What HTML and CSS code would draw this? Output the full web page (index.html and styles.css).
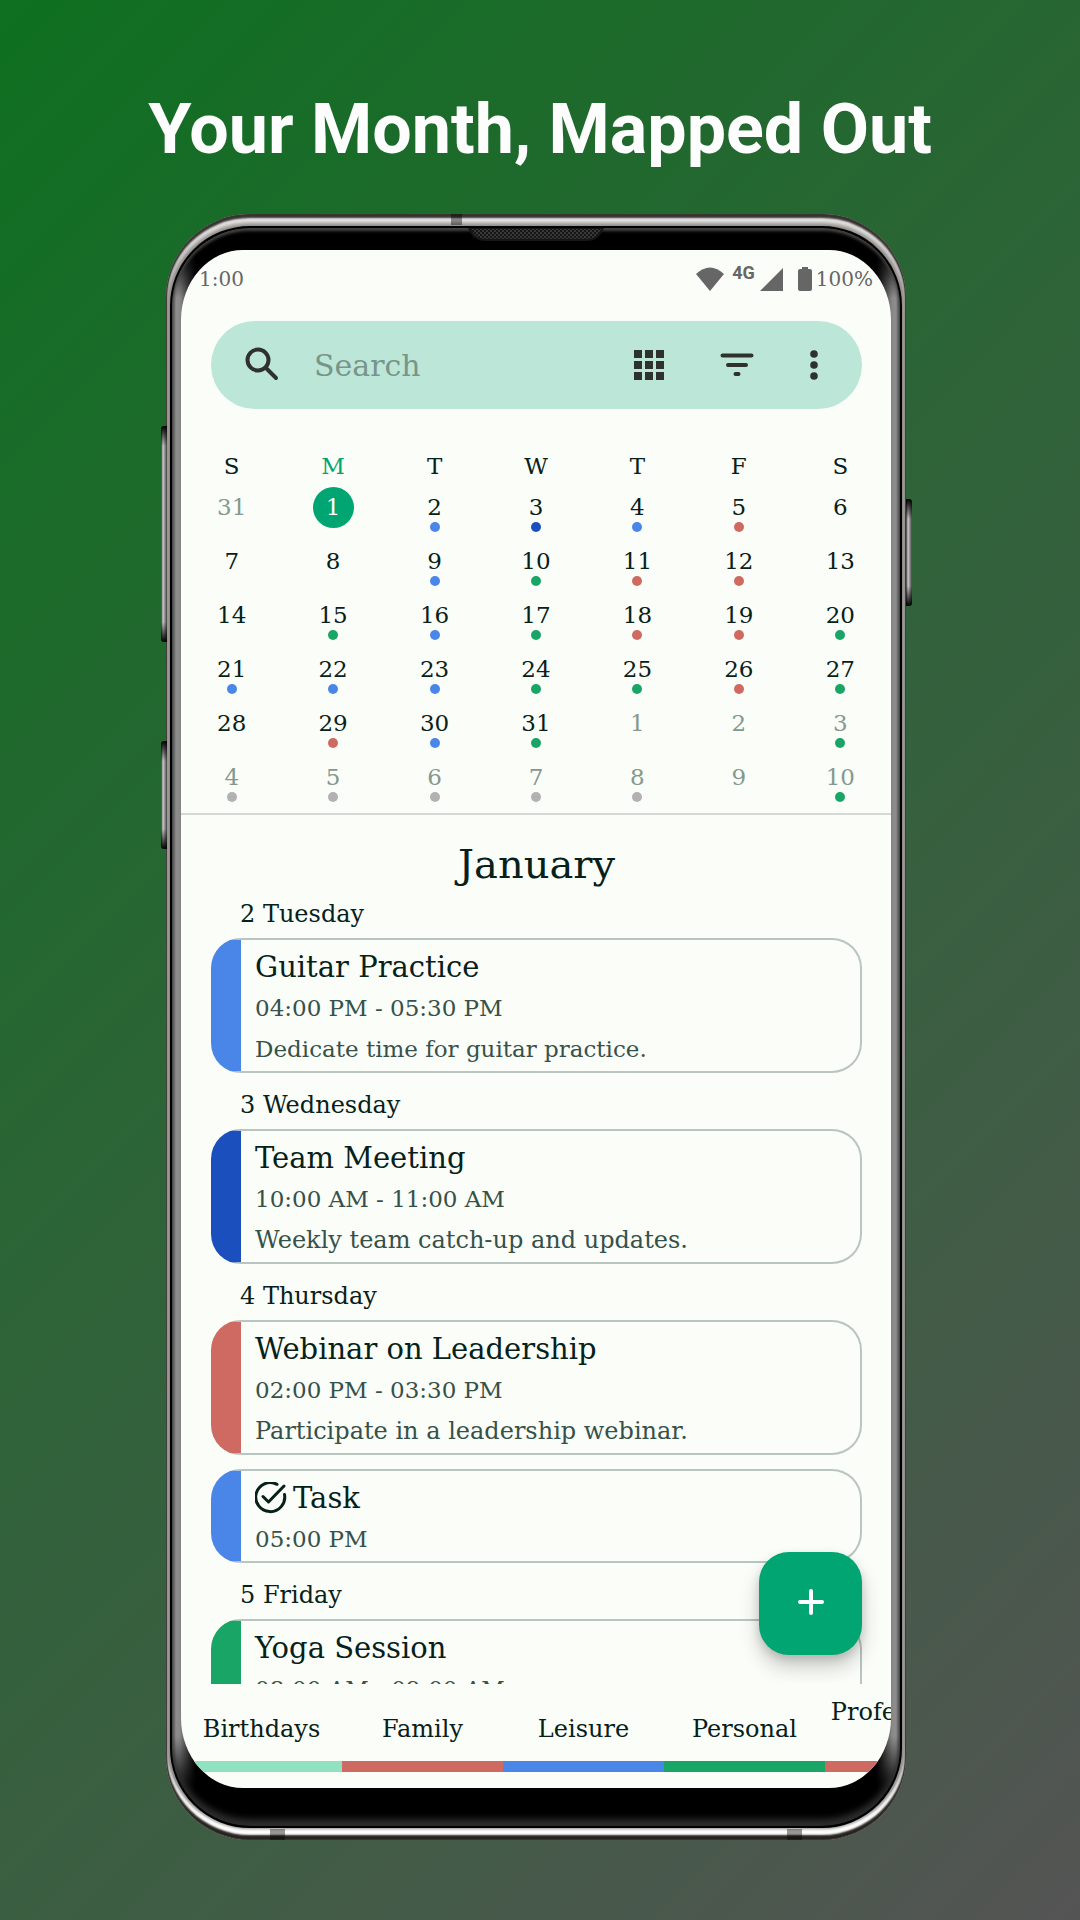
FILE: index.html
```html
<!DOCTYPE html>
<html lang="en">
<head>
<meta charset="utf-8">
<meta name="viewport" content="width=device-width, initial-scale=1">
<title>Your Month, Mapped Out</title>
<link rel="stylesheet" href="styles.css">
</head>
<body>
<main class="promo">
  <h1 class="headline">Your Month, Mapped Out</h1>
  <div class="phone">
    <span class="key key-volume"></span>
    <span class="key key-assist"></span>
    <span class="key key-power"></span>
    <span class="antenna antenna-top"></span>
    <span class="antenna antenna-left"></span>
    <span class="antenna antenna-right"></span>
    <div class="bezel">
      <svg class="speaker" viewBox="0 0 136 14" aria-hidden="true">
        <defs><pattern id="mesh" width="4" height="4" patternUnits="userSpaceOnUse"><path d="M0 0h2v2H0zM2 2h2v2H2z" fill="#383838"/></pattern></defs>
        <path d="M0 0h136c-4 9-8 13-18 13H18C8 13 4 9 0 0z" fill="#161616"/>
        <path d="M3 1h130c-4 8-8 10-16 10H19C11 11 7 9 3 1z" fill="url(#mesh)"/>
      </svg>
      <div class="screen">
        <header class="status">
          <span>1:00</span>
          <span class="status-icons">
            <svg class="wifi" viewBox="0 0 28 24" aria-hidden="true"><path d="M0 7Q14-6 28 7L14 24z" fill="currentColor"/></svg>
            <b class="network">4G</b>
            <svg class="signal" viewBox="0 0 23 23" aria-hidden="true"><path d="M23 0v23H0z" fill="currentColor"/></svg>
            <svg class="battery" viewBox="0 0 14 24" aria-hidden="true"><path d="M4 0h6v2h2q2 0 2 2v18q0 2-2 2H2q-2 0-2-2V4q0-2 2-2h2z" fill="currentColor"/></svg>
            <span>100%</span>
          </span>
        </header>

        <form class="search" role="search">
          <svg class="icon" viewBox="0 0 44 44" fill="none" stroke="currentColor" stroke-width="4" stroke-linecap="round" aria-hidden="true"><circle cx="18" cy="17" r="10.500"/><path d="M27 26l9 9"/></svg>
          <input class="search-input" type="text" placeholder="Search" aria-label="Search">
          <button class="icon-button" type="button" aria-label="Change view"><svg class="icon" viewBox="0 0 44 44" fill="currentColor" aria-hidden="true"><path d="M7 7h8v8H7zM18 7h8v8h-8zM29 7h8v8h-8zM7 18h8v8H7zM18 18h8v8h-8zM29 18h8v8h-8zM7 29h8v8H7zM18 29h8v8h-8zM29 29h8v8h-8z"/></svg></button>
          <button class="icon-button" type="button" aria-label="Filter"><svg class="icon" viewBox="0 0 44 44" fill="none" stroke="currentColor" stroke-width="4" stroke-linecap="round" aria-hidden="true"><path d="M7.500 12.500h29M13 22h18M20.500 31h3"/></svg></button>
          <button class="icon-button more" type="button" aria-label="More options"><svg class="icon" viewBox="0 0 44 44" fill="currentColor" aria-hidden="true"><circle cx="22" cy="11" r="3.800"/><circle cx="22" cy="22" r="3.800"/><circle cx="22" cy="33" r="3.800"/></svg></button>
        </form>

        <table class="calendar" aria-label="January">
          <thead><tr><th>S</th><th class="today-name">M</th><th>T</th><th>W</th><th>T</th><th>F</th><th>S</th></tr></thead>
          <tbody>
            <tr><td class="out">31</td><td class="today"><span>1</span></td><td class="dot blue">2</td><td class="dot navy">3</td><td class="dot blue">4</td><td class="dot red">5</td><td>6</td></tr>
            <tr><td>7</td><td>8</td><td class="dot blue">9</td><td class="dot green">10</td><td class="dot red">11</td><td class="dot red">12</td><td>13</td></tr>
            <tr><td>14</td><td class="dot green">15</td><td class="dot blue">16</td><td class="dot green">17</td><td class="dot red">18</td><td class="dot red">19</td><td class="dot green">20</td></tr>
            <tr><td class="dot blue">21</td><td class="dot blue">22</td><td class="dot blue">23</td><td class="dot green">24</td><td class="dot green">25</td><td class="dot red">26</td><td class="dot green">27</td></tr>
            <tr><td>28</td><td class="dot red">29</td><td class="dot blue">30</td><td class="dot green">31</td><td class="out">1</td><td class="out">2</td><td class="out dot green">3</td></tr>
            <tr><td class="out dot grey">4</td><td class="out dot grey">5</td><td class="out dot grey">6</td><td class="out dot grey">7</td><td class="out dot grey">8</td><td class="out">9</td><td class="out dot green">10</td></tr>
          </tbody>
        </table>

        <section class="agenda">
          <h2 class="month">January</h2>
          <h3 class="day">2 Tuesday</h3>
          <article class="event blue"><h4>Guitar Practice</h4><p>04:00 PM - 05:30 PM</p><p>Dedicate time for guitar practice.</p></article>
          <h3 class="day">3 Wednesday</h3>
          <article class="event navy"><h4>Team Meeting</h4><p>10:00 AM - 11:00 AM</p><p class="note">Weekly team catch-up and updates.</p></article>
          <h3 class="day">4 Thursday</h3>
          <article class="event red"><h4>Webinar on Leadership</h4><p>02:00 PM - 03:30 PM</p><p class="note">Participate in a leadership webinar.</p></article>
          <article class="event blue"><h4><svg class="check" viewBox="0 0 34 34" fill="none" stroke="currentColor" stroke-width="3" stroke-linecap="round" stroke-linejoin="round" aria-hidden="true"><path d="M22 2.300A14.500 14.500 0 1 0 29.500 12.500M8 14.500l5.500 5.500L29 4"/></svg>Task</h4><p>05:00 PM</p></article>
          <h3 class="day">5 Friday</h3>
          <article class="event green"><h4>Yoga Session</h4><p>08:00 AM - 09:00 AM</p></article>
          <button class="fab" type="button" aria-label="Add event"><svg viewBox="0 0 28 28" fill="none" stroke="currentColor" stroke-width="4" stroke-linecap="round" aria-hidden="true"><path d="M14 3v22M3 14h22"/></svg></button>
        </section>

        <nav class="tags" aria-label="Categories">
          <a class="mint" href="#birthdays">Birthdays</a>
          <a class="red" href="#family">Family</a>
          <a class="blue" href="#leisure">Leisure</a>
          <a class="green" href="#personal">Personal</a>
          <a class="red raised" href="#professional">Professional</a>
        </nav>
      </div>
    </div>
  </div>
</main>
</body>
</html>
```
FILE: styles.css
```css
* { box-sizing: border-box; }

:root {
  --ink: #06211a;
  --muted: #36514a;
  --paper: #fbfdf8;
  --accent: #00a572;
}

body {
  margin: 0;
  font-family: "DejaVu Serif", serif;
  font-size: 23px;
  color: var(--ink);
}

h1, h2, h3, h4, p { margin: 0; font-weight: 400; }

.blue { --tag: #4a86e8; }
.navy { --tag: #1c4fbe; }
.red { --tag: #cf6a62; }
.green { --tag: #18a565; }
.mint { --tag: #90e2c0; }
.grey { --tag: #b2b2b2; }

.promo {
  min-height: 100vh;
  padding: 88px 15% 80px;
  display: flex;
  flex-direction: column;
  align-items: center;
  background: linear-gradient(135deg, #0e7020 0%, #545454 100%);
}

.headline {
  margin: 0 -120px 44px;
  font: 700 70px/82px Roboto, sans-serif;
  color: #fdfdfd;
  text-align: center;
}

/* Device */
.phone {
  position: relative;
  width: 100%;
  max-width: 740px;
  margin-right: 8px;
  padding: 12px 4px;
  border-radius: 84px;
  background: #8a8784;
  box-shadow:
    inset 0 0 1px 1px #3a3733,
    inset 0 4px 2px #36322f,
    inset 0 -5px 2px #26231f,
    inset 0 9px 4px #eceaea,
    inset 0 -11px 3px #fff;
}

.bezel {
  position: relative;
  padding: 22px 9px 38px;
  border: 2px solid #000;
  border-radius: 80px;
  background:
    linear-gradient(#000 20px, #0000 70px, #0000 calc(100% - 90px), #000 calc(100% - 30px)),
    linear-gradient(90deg, #666, #989697 4px, #888 8px, #000 24px, #000 calc(100% - 24px), #888 calc(100% - 8px), #989697 calc(100% - 4px), #666);
  box-shadow: inset 0 3px 3px #444, inset 0 -7px 6px #2c2c2c;
}

.screen {
  overflow: hidden;
  border-radius: 62px / 70px;
  background: var(--paper);
}

.key {
  position: absolute;
  width: 6px;
  border-radius: 3px 0 0 3px;
  background: linear-gradient(#000, #0000 20px, #0000 calc(100% - 20px), #000), linear-gradient(90deg, #333, #ccc 2px, #444);
}
.key-volume { left: -5px; top: 212px; height: 216px; }
.key-assist { left: -5px; top: 527px; height: 108px; }
.key-power { right: -6px; top: 285px; height: 107px; border-radius: 0 3px 3px 0; }

.antenna { position: absolute; height: 11px; background: #0006; }
.antenna-top { left: 285px; top: 0; width: 11px; }
.antenna-left { left: 104px; bottom: 0; width: 15px; }
.antenna-right { right: 104px; bottom: 0; width: 15px; }

.speaker { position: absolute; top: 0; left: 50%; width: 136px; height: 14px; margin-left: -68px; }

/* Status bar */
.status {
  display: flex;
  justify-content: space-between;
  padding: 16px 18px 0 18px;
  font-size: 20px;
  line-height: 26px;
  color: #666;
}
.status-icons { display: flex; align-items: center; }
.wifi { width: 28px; height: 24px; }
.network { margin: -12px 5px 0 8px; font: 700 18px/16px Roboto, sans-serif; }
.signal { width: 23px; height: 23px; margin-right: 15px; }
.battery { width: 14px; height: 24px; margin-right: 4px; }

/* Search */
.search {
  display: flex;
  align-items: center;
  height: 88px;
  margin: 29px 29px 0 30px;
  padding: 0 26px 0 29px;
  border-radius: 44px;
  background: #bce7d8;
  color: #2f312f;
}
.icon { display: block; flex: none; width: 44px; height: 44px; }
.search-input {
  flex: 1;
  min-width: 0;
  padding: 0 0 0 30px;
  border: 0;
  background: none;
  font: inherit;
  font-size: 30px;
  color: inherit;
}
.search-input::placeholder { color: #799488; opacity: 1; }
.icon-button { margin: 0 0 0 44px; padding: 0; border: 0; background: none; color: inherit; }
.icon-button.more { margin-left: 33px; }

/* Calendar */
.calendar {
  width: 100%;
  margin-top: 39px;
  padding: 0 0 5px;
  border-collapse: separate;
  border-spacing: 0;
  table-layout: fixed;
  border-bottom: 2px solid #d5d9d5;
  text-align: center;
}
.calendar th { height: 36px; padding: 0; font-weight: 400; line-height: 34px; }
.calendar td { position: relative; height: 54px; padding: 0 0 8px; line-height: 32px; }
.calendar td.out { color: #85988f; }
.calendar .today-name { color: var(--accent); }
.today span {
  display: block;
  width: 41px;
  margin: 0 auto;
  border-radius: 50%;
  background: var(--accent);
  color: #fff;
  line-height: 41px;
}
.dot::after {
  content: "";
  position: absolute;
  left: calc(50% - 5px);
  bottom: 6px;
  width: 10px;
  height: 10px;
  border-radius: 50%;
  background: var(--tag);
}

/* Agenda */
.agenda { position: relative; height: 869px; padding: 24px 29px 0 30px; overflow: hidden; }
.month { font-size: 40px; line-height: 50px; text-align: center; }
.day { padding: 9px 0 8px 29px; font-size: 24px; line-height: 32px; }
.event {
  margin-bottom: 7px;
  padding: 7px 0 1px 14px;
  border: 2px solid #b9c5c0;
  border-left: 30px solid var(--tag);
  border-radius: 30px;
  line-height: 41px;
  color: var(--muted);
}
.event + .event { margin-top: 14px; }
.event h4 { display: flex; align-items: center; gap: 4px; font-size: 29px; color: var(--ink); }
.event .note { font-size: 24px; }
.check { width: 34px; height: 34px; }

.fab {
  position: absolute;
  right: 29px;
  bottom: 29px;
  width: 103px;
  height: 103px;
  padding: 0;
  border: 0;
  border-radius: 30px;
  background: var(--accent);
  color: #fff;
  box-shadow: 0 12px 20px #0003, 0 4px 8px #0002;
}
.fab svg { width: 28px; height: 28px; }

/* Category tabs */
.tags { display: flex; height: 104px; padding-bottom: 16px; }
.tags a {
  flex: none;
  width: 161px;
  padding-top: 28px;
  border-bottom: 11px solid var(--tag);
  font-size: 24px;
  line-height: 34px;
  color: inherit;
  text-align: center;
  text-decoration: none;
}
.tags .raised { padding-top: 11px; }
```
